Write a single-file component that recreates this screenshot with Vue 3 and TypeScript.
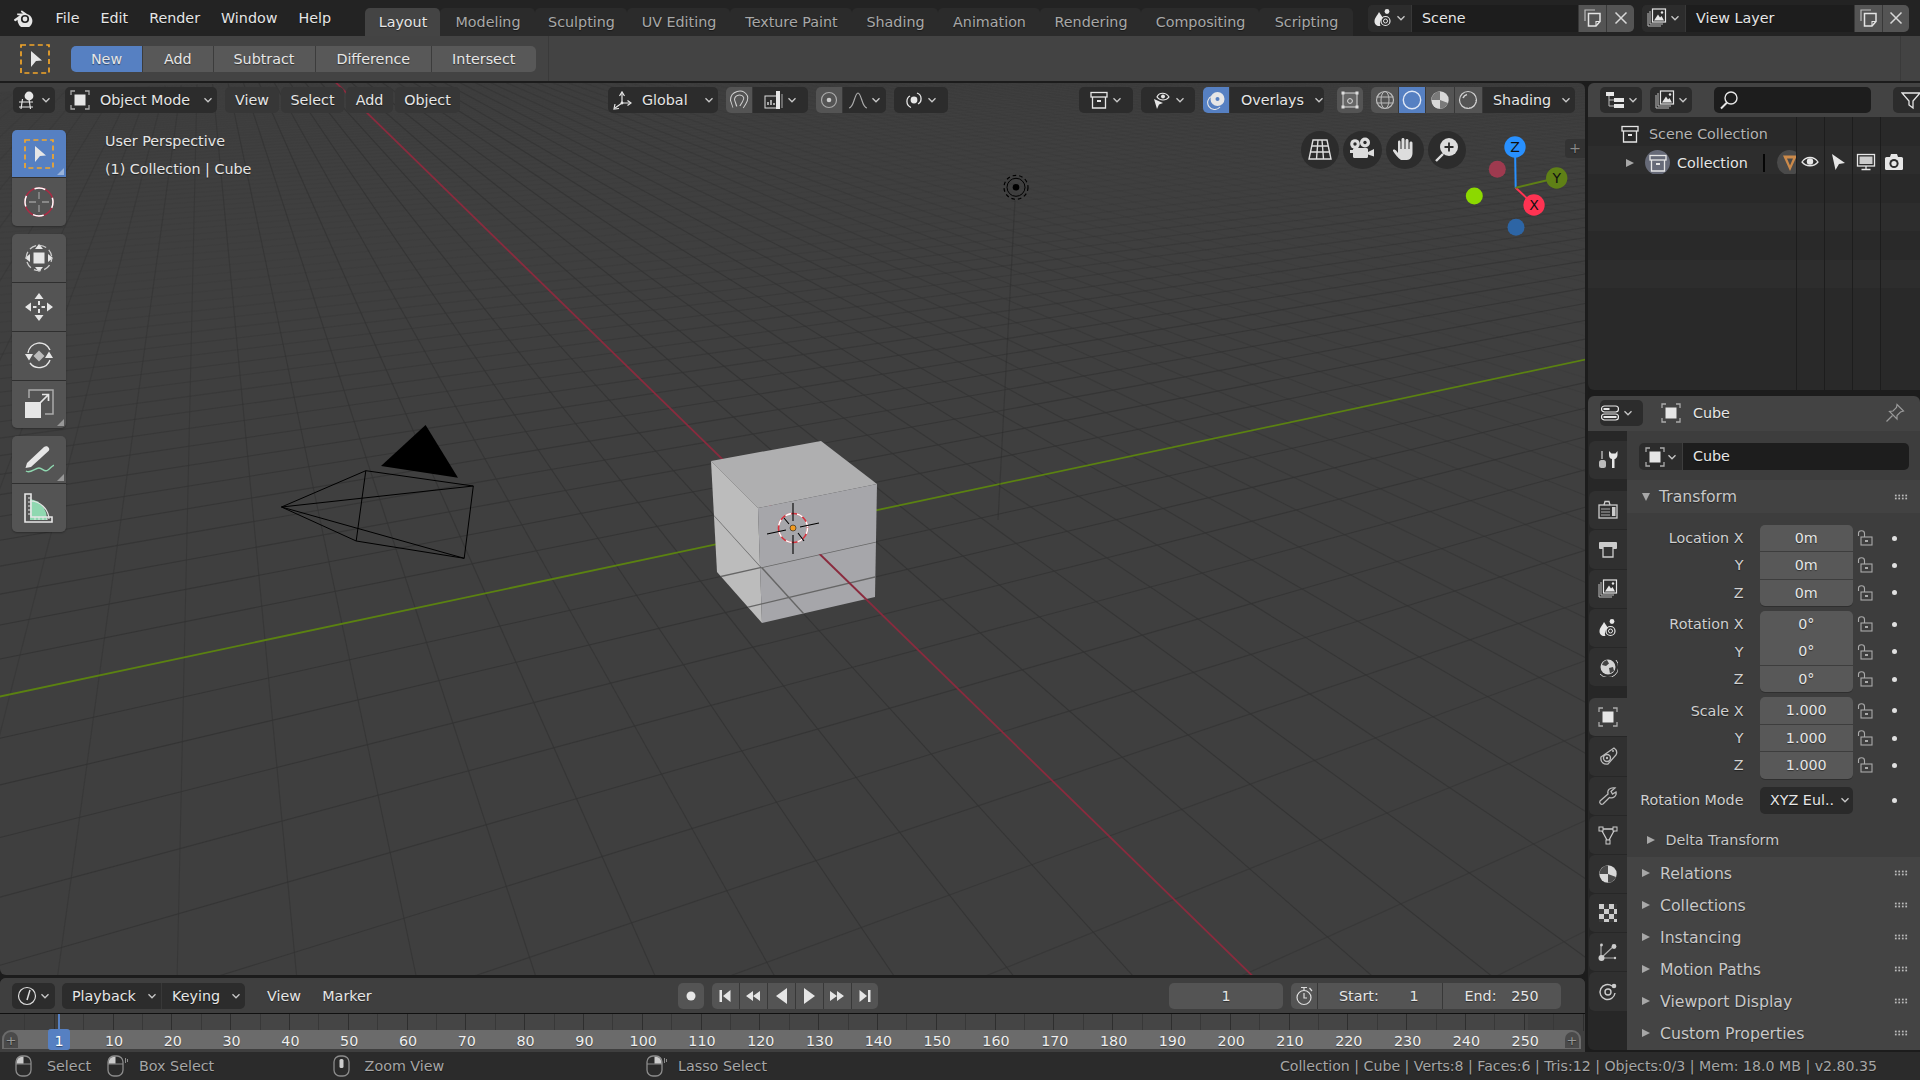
<template>
  <div class="app">
    <!-- barra superior -->
    <header class="topbar">
      <div class="logo"><svg width="22" height="18" viewBox="0 0 22 18" v-html="logoIcon" /></div>
      <nav class="menus">
        <span v-for="m in menus" :key="m" class="menu">{{ m }}</span>
      </nav>
      <div class="tabs">
        <div
          v-for="t in tabs"
          :key="t.name"
          class="tab"
          :class="{ active: t.name === 'Layout' }"
          :style="{ width: t.w + 'px' }"
        >
          {{ t.name }}
        </div>
      </div>
      <div class="bar-groups">
        <div v-for="(g, i) in topGroups" :key="i" class="grp" :style="{ marginLeft: g.gap + 'px' }">
          <div v-for="(p, j) in g.parts" :key="j" class="part" :class="partClass(p)" :style="partStyle(p)">
            <svg v-if="p.icon" width="20" height="20" viewBox="0 0 20 20" v-html="icons[p.icon]" />
            <span v-if="p.text">{{ p.text }}</span>
            <svg v-if="p.chev" class="chev" width="10" height="10" viewBox="0 0 10 10" v-html="chevron" />
          </div>
        </div>
      </div>
    </header>

    <!-- opções da ferramenta -->
    <section class="toolsettings">
      <div class="ts-icon"><svg width="30" height="30" viewBox="0 0 30 30" v-html="tools.select" /></div>
      <div class="booleans">
        <div
          v-for="b in booleans"
          :key="b.name"
          class="bool"
          :class="{ on: b.name === 'New' }"
          :style="{ width: b.w + 'px' }"
        >
          {{ b.name }}
        </div>
      </div>
      <div class="ts-sep" />
      <div class="ts-sep end" />
    </section>

    <div class="workspace">
      <div class="left-col">
        <!-- viewport 3D -->
        <main class="viewport">
          <svg class="scene" width="1585" height="892" viewBox="0 83 1585 892">
            <defs>
              <clipPath id="lowerCube"><polygon :points="lowerCubeClip" /></clipPath>
            </defs>
            <path v-for="l in gridLines" :key="l.id" :d="l.d" fill="none" stroke="#333" :stroke-opacity="l.o" stroke-width="1.1" />
            <path :d="redAxis" stroke="#8a2b3e" stroke-width="1.8" fill="none" />
            <path :d="greenAxis" stroke="#5b8211" stroke-width="1.8" fill="none" />

            <!-- câmera -->
            <g fill="none" stroke="#000" stroke-width="1">
              <path d="M281.5 507 L365.8 470.7 L473.3 486 L464.2 558.3 L356.2 541 L281.5 507 L473.3 486 M281.5 507 L464.2 558.3 M365.8 470.7 L356.2 541" />
            </g>
            <polygon points="425.6,425 381,466 458,477.7" fill="#000" />

            <!-- lâmpada -->
            <path d="M1015 200 L998 520" stroke="#2a2a2a" stroke-width="1.2" stroke-opacity=".4" />
            <circle cx="1016" cy="187.3" r="3.3" fill="#000" />
            <circle cx="1016" cy="187.3" r="9" fill="none" stroke="#000" stroke-width="1" />
            <circle cx="1016" cy="187.3" r="12" fill="none" stroke="#000" stroke-width="1.2" stroke-dasharray="3.6 3" />

            <!-- cubo -->
            <polygon points="711,461 821,441 877,484 758,508" fill="#afafb0" />
            <polygon points="711,461 758,508 762,623 717,572" fill="#bcbcbc" />
            <polygon points="758,508 877,484 875,597 762,623" fill="#a6a6aa" />
            <g clip-path="url(#lowerCube)">
              <path v-for="l in cubeLines" :key="l" :d="l" fill="none" stroke="#666" stroke-width="1.4" />
              <path :d="redAxis" stroke="#8a2b3e" stroke-width="2" fill="none" />
            </g>

            <!-- cursor 3D -->
            <g fill="none">
              <circle cx="793" cy="528" r="14.5" stroke="#d8323e" stroke-width="1.6" />
              <circle cx="793" cy="528" r="14.5" stroke="#fff" stroke-width="1.6" stroke-dasharray="6 6" />
              <path d="M793 503 V521 M793 535 V554 M767 534 L786 530 M800 527 L819 523 M784 518 L789 524 M798 533 L804 541" stroke="#000" stroke-width="1.1" />
            </g>
            <circle cx="793" cy="528" r="3" fill="#f29b21" stroke="#1a1a1a" stroke-width=".6" />
          </svg>

          <div class="vp-header">
            <div v-for="(g, i) in viewGroups" :key="i" class="grp" :style="{ marginLeft: g.gap + 'px' }">
              <div v-for="(p, j) in g.parts" :key="j" class="part" :class="partClass(p)" :style="partStyle(p)">
                <svg v-if="p.icon" width="20" height="20" viewBox="0 0 20 20" v-html="icons[p.icon]" />
                <span v-if="p.text">{{ p.text }}</span>
                <svg v-if="p.chev" class="chev" width="10" height="10" viewBox="0 0 10 10" v-html="chevron" />
              </div>
            </div>
          </div>

          <div class="vp-body">
            <aside class="toolbar">
              <div v-for="(group, i) in toolGroups" :key="i" class="tool-group">
                <div v-for="t in group" :key="t.id" class="tool" :class="{ on: t.id === 'select' }" :style="{ height: t.h + 'px' }">
                  <svg width="30" height="30" viewBox="0 0 30 30" v-html="tools[t.id]" />
                  <i v-if="t.more" class="more" />
                </div>
              </div>
            </aside>
            <div class="vp-info">
              <div>User Perspective</div>
              <div>(1) Collection | Cube</div>
            </div>
          </div>

          <!-- gizmos de navegação -->
          <div class="nav-buttons">
            <div v-for="b in navButtons" :key="b" class="nav-btn">
              <svg width="26" height="26" viewBox="0 0 26 26" v-html="navIcons[b]" />
            </div>
          </div>
          <svg class="axis-gizmo" width="120" height="120" viewBox="1460 130 120 120">
            <circle cx="1497.3" cy="169.3" r="8.5" fill="#9e3a4f" />
            <circle cx="1474.3" cy="196" r="8.5" fill="#8cd900" />
            <circle cx="1516" cy="227.3" r="8.5" fill="#2d65a5" />
            <path d="M1515.7 187.7 L1515 147" stroke="#2890ff" stroke-width="2" />
            <path d="M1515.7 187.7 L1534 205" stroke="#ff3352" stroke-width="2" />
            <path d="M1515.7 187.7 L1556.7 178" stroke="#5f8016" stroke-width="2" />
            <circle cx="1515" cy="147" r="10.7" fill="#2890ff" />
            <circle cx="1534" cy="205" r="10.7" fill="#ff3352" />
            <circle cx="1556.7" cy="178" r="10.7" fill="#5f8016" />
            <text x="1515" y="152" class="axis-letter">Z</text>
            <text x="1534" y="210" class="axis-letter">X</text>
            <text x="1556.7" y="183" class="axis-letter">Y</text>
          </svg>
          <div class="vp-plus">+</div>
        </main>

        <!-- linha do tempo -->
        <section class="timeline">
          <div class="tl-header">
            <div v-for="(g, i) in timelineGroups" :key="i" class="grp" :class="{ plain: g.plain }" :style="{ marginLeft: g.gap + 'px' }">
              <div v-for="(p, j) in g.parts" :key="j" class="part" :class="partClass(p)" :style="partStyle(p)">
                <svg v-if="p.icon" width="20" height="20" viewBox="0 0 20 20" v-html="icons[p.icon]" />
                <span v-if="p.text">{{ p.text }}</span>
                <span v-if="p.text2" class="val">{{ p.text2 }}</span>
                <svg v-if="p.chev" class="chev" width="10" height="10" viewBox="0 0 10 10" v-html="chevron" />
              </div>
            </div>
          </div>
          <div class="tl-body">
            <svg class="tl-ticks" width="1585" height="35" viewBox="0 0 1585 35">
              <rect x="59" y="0" width="1469" height="35" fill="#454545" />
              <path v-for="t in timelineTicks" :key="t.x" :d="`M${t.x} 0 V17`" :stroke="t.major ? '#2e2e2e' : '#383838'" stroke-width="1" />
            </svg>
            <div class="tl-line" />
            <div class="ruler">
              <span v-for="f in frameLabels" :key="f" class="frame-num" :style="{ left: frameX(f) + 1.5 + 'px' }">{{ f }}</span>
              <span class="ruler-end left">+</span>
              <span class="ruler-end right">+</span>
            </div>
            <div class="frame-cursor"><span>1</span></div>
          </div>
        </section>
      </div>

      <div class="right-col">
        <!-- outliner -->
        <section class="outliner">
          <div class="ol-header">
            <div v-for="(g, i) in outlinerGroups" :key="i" class="grp" :style="{ marginLeft: g.gap + 'px' }">
              <div v-for="(p, j) in g.parts" :key="j" class="part" :class="partClass(p)" :style="partStyle(p)">
                <svg v-if="p.icon" width="20" height="20" viewBox="0 0 20 20" v-html="icons[p.icon]" />
                <svg v-if="p.chev" class="chev" width="10" height="10" viewBox="0 0 10 10" v-html="chevron" />
              </div>
            </div>
          </div>
          <div class="ol-rows">
            <div class="ol-row">
              <div class="ol-clip">
                <svg class="ol-scene-ic" width="20" height="20" viewBox="0 0 20 20" v-html="icons.collection" />
                <span class="ol-scene">Scene Collection</span>
              </div>
            </div>
            <div class="ol-row alt">
              <div class="ol-clip">
                <i class="tri right ol-tri" />
                <span class="ol-badge"><svg width="20" height="20" viewBox="0 0 20 20" v-html="icons.collection" /></span>
                <span class="ol-name">Collection</span>
                <i class="ol-caret" />
                <span class="ol-mesh"><svg width="20" height="20" viewBox="0 0 20 20" v-html="icons.meshData" /></span>
              </div>
            </div>
            <div class="ol-row" />
            <div class="ol-row alt" />
            <div class="ol-row" />
            <div class="ol-row alt" />
            <div class="ol-row" />
            <div class="ol-cols">
              <div v-for="c in outlinerCols" :key="c" class="ol-col">
                <svg class="ol-col-ic" width="20" height="20" viewBox="0 0 20 20" v-html="icons[c]" />
              </div>
            </div>
          </div>
        </section>

        <!-- propriedades -->
        <section class="properties">
          <div class="pr-header">
            <div class="grp">
              <div class="part dark" style="width: 43px">
                <svg width="20" height="20" viewBox="0 0 20 20" v-html="icons.propsEditor" />
                <svg class="chev" width="10" height="10" viewBox="0 0 10 10" v-html="chevron" />
              </div>
            </div>
            <svg class="pr-cube" width="20" height="20" viewBox="0 0 20 20" v-html="icons.object" />
            <span class="pr-title">Cube</span>
            <svg class="pr-pin" width="20" height="20" viewBox="0 0 20 20" v-html="icons.pin" />
          </div>
          <div class="pr-main">
            <nav class="pr-tabs">
              <div v-for="(tg, i) in propTabs" :key="i" class="pr-tabgroup">
                <div v-for="t in tg" :key="t" class="pr-tab" :class="{ on: t === 'object' }">
                  <svg width="20" height="20" viewBox="0 0 20 20" v-html="icons[t]" />
                </div>
              </div>
            </nav>
            <div class="pr-content">
              <div class="name-row">
                <div class="name-ic">
                  <svg width="20" height="20" viewBox="0 0 20 20" v-html="icons.object" />
                  <svg class="chev" width="10" height="10" viewBox="0 0 10 10" v-html="chevron" />
                </div>
                <div class="name-field">Cube</div>
              </div>

              <div class="panel-head first">
                <i class="tri down" />
                <span>Transform</span>
                <span class="grip" />
              </div>
              <div class="panel-body">
                <div v-for="blk in transformBlocks" :key="blk.id" class="xf-block">
                  <div v-for="(r, i) in blk.rows" :key="i" class="xf-row">
                    <label>{{ r.label }}</label>
                    <div class="xf-field" :class="{ first: i === 0, last: i === blk.rows.length - 1 }">{{ r.value }}</div>
                    <svg class="lock" width="18" height="18" viewBox="0 0 18 18" v-html="lockIcon" />
                    <i class="dot" />
                  </div>
                </div>
                <div class="xf-row mode">
                  <label>Rotation Mode</label>
                  <div class="mode-select">
                    <span>XYZ Eul..</span>
                    <svg class="chev" width="10" height="10" viewBox="0 0 10 10" v-html="chevron" />
                  </div>
                  <i class="dot" />
                </div>
                <div class="subpanel"><i class="tri right" /><span>Delta Transform</span></div>
              </div>
              <div class="collapsed">
                <div v-for="p in collapsedPanels" :key="p" class="panel-head">
                  <i class="tri right" />
                  <span>{{ p }}</span>
                  <span class="grip" />
                </div>
              </div>
            </div>
          </div>
        </section>
      </div>
    </div>

    <!-- barra de status -->
    <footer class="statusbar">
      <div v-for="s in statusHints" :key="s.text" class="hint" :style="{ width: s.w + 'px' }">
        <svg width="22" height="22" viewBox="0 0 22 22" v-html="mouseIcons[s.mouse]" />
        <span>{{ s.text }}</span>
      </div>
      <div class="stats">Collection | Cube | Verts:8 | Faces:6 | Tris:12 | Objects:0/3 | Mem: 18.0 MB | v2.80.35</div>
    </footer>
  </div>
</template>

<script setup lang="ts">
interface Part {
  w: number
  icon?: string
  text?: string
  text2?: string
  chev?: boolean
  tone?: string
  left?: boolean
  pad?: number
  padR?: number
}

interface Group {
  gap: number
  plain?: boolean
  parts: Part[]
}

const W = '#e6e6e6'

const chevron = '<path d="M1.5 3.2 L5 6.8 L8.5 3.2" fill="none" stroke="#c8c8c8" stroke-width="1.3"/>'

const logoIcon =
  `<path fill="${W}" d="M1 10.5 L7 6.2 L5 6.2 Q3.8 6 4.2 4.6 L10 4.6 L8 3 Q7.6 1.8 9 1.6 L14 5 A7.2 7.2 0 1 1 5.4 14.4 A6 6 0 0 1 4.6 10.8 L2.6 12.3 Q1 12.4 1 10.5 Z"/>` +
  `<circle cx="12" cy="10" r="4.1" fill="#232323"/><circle cx="12" cy="10" r="2.4" fill="${W}"/>`

const icons: Record<string, string> = {
  view3d:
    `<path d="M1 12 H15 M1 17 H15 M4.5 9 L3 19 M11 9 L12.5 19" fill="none" stroke="${W}" stroke-width="1.2"/><circle cx="11" cy="6" r="4.4" fill="${W}"/>`,
  object:
    `<path d="M1 5 V1 H5 M15 1 H19 V5 M19 15 V19 H15 M5 19 H1 V15" fill="none" stroke="#aaa" stroke-width="1.3"/><rect x="4.5" y="4.5" width="11" height="11" fill="${W}"/>`,
  orient:
    `<path d="M10 3 V13 M10 13 L18 13 M10 13 L3 18" fill="none" stroke="${W}" stroke-width="1.2"/><path d="M7.5 6 L10 2 L12.5 6 M15.5 10.5 L19 13 L15.5 15.5 M3 14 L2 19 L7 18.5" fill="none" stroke="${W}" stroke-width="1.2"/><circle cx="10" cy="13" r="1.4" fill="${W}"/>`,
  snap:
    `<path d="M6 17 L3.5 10 A7 7 0 0 1 16.5 6.5 C17.5 9 16 11 15 13 L12.5 17" fill="none" stroke="#d0d0d0" stroke-width="5"/><path d="M6 18 L3.5 10 A7 7 0 0 1 16.5 6.5 C17.5 9 16 11 15 13 L12 18" fill="none" stroke="#545454" stroke-width="3"/>`,
  snapTarget:
    `<rect x="1" y="6" width="12" height="12" fill="none" stroke="#ddd" stroke-width="1"/><path d="M4 15 V12 M7 15 V10 M10 15 V13" stroke="#ddd" stroke-width="1.4"/><rect x="12" y="1" width="4" height="18" fill="${W}"/><path d="M18 4 V18" stroke="#aaa"/>`,
  propOn:
    `<circle cx="10" cy="10" r="7.5" fill="none" stroke="#aaa" stroke-width="1.2"/><circle cx="10" cy="10" r="2.3" fill="#ccc"/>`,
  falloff:
    `<path d="M1 18 C6 18 6.5 3 10 3 C13.5 3 14 18 19 18" fill="none" stroke="#aaa" stroke-width="1.2"/>`,
  pivot:
    `<path d="M7 17.5 C1.5 15 2 8 6 6 M13 3 C18.5 5 18 12 14 14" fill="none" stroke="${W}" stroke-width="1.3"/><circle cx="10" cy="10" r="3.4" fill="${W}"/>`,
  collection:
    `<rect x="2" y="2.5" width="16" height="4.5" fill="none" stroke="${W}" stroke-width="1.3"/><path d="M3.5 7 V18 H16.5 V7" fill="none" stroke="${W}" stroke-width="1.3"/><rect x="8" y="10" width="4" height="2" fill="${W}"/>`,
  eyeArrow:
    `<path d="M5 7 C7 2 14 2 17 7 C14 11 8 11 5 7 Z" fill="none" stroke="${W}" stroke-width="1.2"/><circle cx="11" cy="6.5" r="2" fill="${W}"/><path d="M2 9 L11 13 L7 14.5 L5 19 Z" fill="${W}"/>`,
  overlays:
    `<circle cx="11.5" cy="9" r="7" fill="${W}"/><path d="M6 6 A7 7 0 1 0 14 17" fill="none" stroke="${W}" stroke-width="1.1"/><circle cx="11.5" cy="9" r="2" fill="#5680c2"/>`,
  xray:
    `<rect x="3" y="3" width="14" height="14" fill="#666" stroke="#ccc" stroke-width="1.1"/><rect x="1.5" y="1.5" width="3" height="3" fill="#ddd"/><rect x="15.5" y="1.5" width="3" height="3" fill="#ddd"/><rect x="1.5" y="15.5" width="3" height="3" fill="#ddd"/><rect x="15.5" y="15.5" width="3" height="3" fill="#ddd"/><circle cx="10" cy="11" r="2.4" fill="none" stroke="#ddd"/>`,
  wire:
    `<circle cx="10" cy="10" r="8.5" fill="none" stroke="#bdbdbd" stroke-width="1.2"/><ellipse cx="10" cy="10" rx="4" ry="8.5" fill="none" stroke="#bdbdbd"/><path d="M1.5 7 H18.5 M1.5 13 H18.5" stroke="#bdbdbd"/>`,
  solid: `<circle cx="10" cy="10" r="8.7" fill="none" stroke="#dfe7f5" stroke-width="1.4"/>`,
  material:
    `<circle cx="10" cy="10" r="8.7" fill="#d8d8d8"/><path d="M10 1.5 A8.5 8.5 0 0 0 1.5 10 L10 10 Z M10 10 L18 13 A8.5 8.5 0 0 1 10 18.5 Z" fill="#7a7a7a"/><path d="M10 10 L10 18.5 A8.5 8.5 0 0 1 2 13 Z" fill="#d8d8d8"/>`,
  rendered:
    `<circle cx="10" cy="10" r="8.5" fill="none" stroke="#d0d0d0" stroke-width="1.2"/><path d="M5 8 A6 6 0 0 1 9 4.5" fill="none" stroke="#d0d0d0" stroke-width="1.6"/><path d="M6 17 A8 8 0 0 0 18 10" fill="none" stroke="#d0d0d0" stroke-width="1" stroke-dasharray="1.4 1.2"/>`,
  tree:
    `<rect x="1" y="2" width="8" height="4" fill="${W}"/><rect x="9" y="8" width="10" height="4" fill="${W}"/><rect x="9" y="14" width="10" height="4" fill="${W}"/><path d="M4 6 V16 H9 M4 10 H9" fill="none" stroke="#bbb"/>`,
  viewLayer:
    `<path d="M1 5 V18 H14 M3 3 V16 H16" fill="none" stroke="#bbb" stroke-width="1"/><rect x="5.5" y="1" width="13" height="13" fill="none" stroke="${W}" stroke-width="1.2"/><path d="M7 12.5 L11 6.5 L13 9.5 L14.5 8 L17 12.5 Z" fill="${W}"/><circle cx="15" cy="4.5" r="1.2" fill="${W}"/>`,
  search:
    `<circle cx="12" cy="8" r="6" fill="none" stroke="${W}" stroke-width="1.4"/><path d="M8 12.5 L2 18.5" stroke="${W}" stroke-width="2"/>`,
  filter: `<path d="M1 3 H19 L12 11 V18 L8 15 V11 Z" fill="none" stroke="${W}" stroke-width="1.3"/>`,
  scene:
    `<path d="M6 4 C4 8 1.5 10 1.5 13.5 C1.5 16 3.6 18 6 18 C6.5 18 7 18 7.5 17.8 A6 6 0 0 1 10 10 Z" fill="${W}"/><circle cx="14" cy="3.5" r="2.4" fill="${W}"/><circle cx="12.5" cy="13" r="4.5" fill="none" stroke="${W}" stroke-width="1.2"/><circle cx="12.5" cy="13" r="2" fill="none" stroke="${W}"/>`,
  copy:
    `<path d="M2 13 V2 H12" fill="none" stroke="#bdbdbd" stroke-width="1.2"/><path d="M5.5 5.5 H17 V13.5 L13 18 H5.5 Z" fill="none" stroke="#e4e4e4" stroke-width="1.5"/><path d="M13 18 V13.5 H17" fill="none" stroke="#e4e4e4" stroke-width="1.1"/>`,
  close: `<path d="M4.5 4.5 L15.5 15.5 M15.5 4.5 L4.5 15.5" stroke="#d8d8d8" stroke-width="1.5"/>`,
  clock:
    `<circle cx="10" cy="10" r="8.5" fill="none" stroke="#ddd" stroke-width="1.2"/><path d="M10 14 L13 4" stroke="#ddd" stroke-width="1.5"/>`,
  record: `<circle cx="10" cy="10" r="4.5" fill="${W}"/>`,
  jumpStart: `<rect x="4.5" y="4" width="2.5" height="12" fill="${W}"/><path d="M15.5 4 V16 L8 10 Z" fill="${W}"/>`,
  rewind: `<path d="M10 5 V15 L3 10 Z M17 5 V15 L10 10 Z" fill="${W}"/>`,
  playBack: `<path d="M15 2 V18 L4 10 Z" fill="${W}"/>`,
  play: `<path d="M5 2 V18 L16 10 Z" fill="${W}"/>`,
  forward: `<path d="M3 5 V15 L10 10 Z M10 5 V15 L17 10 Z" fill="${W}"/>`,
  jumpEnd: `<path d="M4.5 4 V16 L12 10 Z" fill="${W}"/><rect x="13" y="4" width="2.5" height="12" fill="${W}"/>`,
  timer:
    `<circle cx="10" cy="11.5" r="7" fill="none" stroke="#ddd" stroke-width="1.2"/><path d="M7 1.5 H13 M10 2 V4.5 M10 7 V12 H13 M15.5 2 L18 5" fill="none" stroke="#ddd" stroke-width="1.2"/>`,
  propsEditor:
    `<rect x="1.5" y="3" width="17" height="6" rx="3" fill="none" stroke="${W}" stroke-width="1.2"/><rect x="1.5" y="11" width="17" height="6" rx="3" fill="none" stroke="${W}" stroke-width="1.2"/><rect x="3.5" y="5" width="6" height="2" fill="${W}"/><rect x="3.5" y="13" width="13" height="2" fill="${W}"/>`,
  pin:
    `<path d="M12 1.5 L18.5 8 L15.5 9 L12 12.5 L12 16 L4.5 8.5 L8 8 L11.5 4.5 Z" fill="none" stroke="#999" stroke-width="1.2"/><path d="M7.5 12.5 L1.5 18.5" stroke="#999" stroke-width="1.2"/>`,
  tool:
    `<path d="M4 1 V9" stroke="#bbb" stroke-width="1.4"/><rect x="1" y="10" width="7" height="8" rx="2.5" fill="#bbb"/><path d="M11 1 V5 C11 8 13 9 14 9 V18 H16.5 V9 C18 9 19.5 7 19.5 5 V1 L17.5 3.5 H13.5 Z" fill="${W}"/>`,
  render:
    `<rect x="1" y="5" width="18" height="13" fill="none" stroke="#ccc" stroke-width="1.3"/><path d="M6 5 L7 1.5 H11 L12 5" fill="none" stroke="#ccc" stroke-width="1.3"/><path d="M3 9 H12 M3 12 H12 M3 15 H12" stroke="#aaa"/><rect x="14" y="7" width="3.5" height="9" fill="#ccc"/>`,
  output:
    `<rect x="1" y="3" width="18" height="7" rx="1" fill="#ccc"/><path d="M5 8 V18 H15 V8" fill="#333" stroke="#ccc" stroke-width="1.3"/>`,
  world:
    `<circle cx="10" cy="10" r="7.5" fill="#d4d4d4"/><path d="M9 3 L11 6.5 L8 9 L4 8 A7 7 0 0 1 9 3 Z M11 11 L15 10 L16 14 L12 16.5 Z" fill="#444"/><path d="M2 17 A10 10 0 0 0 18 3" fill="none" stroke="#ccc" stroke-width="1"/>`,
  constraint:
    `<path d="M3 11 L16 2 C19 4 19 7 18 9 L10 18 C6 19 2 16 3 11 Z" fill="none" stroke="#bbb" stroke-width="1.3"/><circle cx="9" cy="12" r="3.5" fill="none" stroke="#bbb" stroke-width="1.4"/><circle cx="9" cy="12" r="1.2" fill="#bbb"/><circle cx="15" cy="5" r="1" fill="#bbb"/>`,
  modifier:
    `<path d="M2 15 L10 8 C9 4 12 1 17 2 L13 5.5 L14.5 8 L18 6 C19 10 15 13 11.5 11.5 L5 18 C3 19 1 17 2 15 Z" fill="none" stroke="#bbb" stroke-width="1.3"/>`,
  mesh:
    `<path d="M3 4 H17 L10 17 Z" fill="none" stroke="#ccc" stroke-width="1.3"/><rect x="1" y="2" width="4" height="4" fill="#333" stroke="#ccc"/><rect x="15" y="2" width="4" height="4" fill="#333" stroke="#ccc"/><rect x="8" y="15" width="4" height="4" fill="#333" stroke="#ccc"/>`,
  matTab:
    `<circle cx="10" cy="10" r="8.7" fill="#d8d8d8"/><path d="M10 1.5 A8.5 8.5 0 0 0 1.5 10 L10 10 Z M10 10 L18 13 A8.5 8.5 0 0 1 10 18.5 Z" fill="#4a4a4a"/>`,
  texture:
    `<rect x="1" y="1" width="18" height="18" fill="#3a3a3a"/><path d="M1 1 H6 V6 H1 Z M11 1 H16 V6 H11 Z M6 6 H11 V11 H6 Z M16 6 H19 V11 H16 Z M1 11 H6 V16 H1 Z M11 11 H16 V16 H11 Z M6 16 H11 V19 H6 Z M16 16 H19 V19 H16 Z" fill="#ccc"/>`,
  particles:
    `<path d="M3 16 L17 3 M3 16 H17 M3 16 V3" stroke="#aaa" stroke-width="1.2" fill="none"/><circle cx="3.5" cy="16" r="3" fill="#ccc"/><circle cx="16" cy="4.5" r="2.4" fill="#ccc"/><circle cx="3.5" cy="3" r="1.4" fill="#ccc"/><circle cx="17" cy="16" r="1.2" fill="#ccc"/>`,
  physics:
    `<path d="M14 4 A7.5 7.5 0 1 0 17 11" fill="none" stroke="#ccc" stroke-width="1.4"/><circle cx="10" cy="10" r="3" fill="none" stroke="#ccc" stroke-width="1.4"/><circle cx="16" cy="4" r="2.3" fill="#ccc"/>`,
  meshData: `<path d="M3 2.5 H17 L10 18 Z M7 5.5 H13 L10 12.5 Z" fill="#cc8a4a" fill-rule="evenodd"/>`,
  eye:
    `<path d="M2 10 C6 4 14 4 18 10 C14 15 6 15 2 10 Z" fill="none" stroke="${W}" stroke-width="1.3"/><circle cx="10" cy="9.5" r="3.2" fill="${W}"/>`,
  cursorArrow: `<path d="M4 2 L17 11 L11 12 L7.5 18 Z" fill="${W}"/>`,
  monitor:
    `<rect x="1.5" y="2.5" width="17" height="11.5" fill="none" stroke="${W}" stroke-width="1.3"/><rect x="3.5" y="4.5" width="13" height="7.5" fill="#ccc"/><path d="M10 14 V17 M5.5 17.5 H14.5" stroke="${W}" stroke-width="1.3"/>`,
  cameraRender:
    `<rect x="1" y="5" width="18" height="13" rx="1.5" fill="${W}"/><path d="M6 5 L7 2 H13 L14 5 Z" fill="${W}"/><circle cx="10" cy="11.5" r="4.6" fill="#2b2b2b"/><circle cx="10" cy="11.5" r="2.6" fill="${W}"/>`,
}

const tools: Record<string, string> = {
  select:
    `<rect x="1" y="1" width="28" height="28" fill="none" stroke="#f4a62a" stroke-width="1.7" stroke-dasharray="5 3.4"/><path d="M11 7 L22 16.5 L16 17 L11 23 Z" fill="${W}"/>`,
  cursor:
    `<circle cx="15" cy="15" r="14" fill="none" stroke="#a82c44" stroke-width="1.5"/><circle cx="15" cy="15" r="14" fill="none" stroke="#fff" stroke-width="1.5" stroke-dasharray="11 11" stroke-dashoffset="5"/><path d="M15 5 V12 M15 18 V25 M5 15 H12 M18 15 H25" stroke="#999" stroke-width="1.3"/>`,
  transform:
    `<rect x="9.5" y="9.5" width="11" height="11" fill="${W}"/><path d="M15 1 L19 6 H11 Z M15 29 L19 24 H11 Z M1 15 L6 11 V19 Z M29 15 L24 11 V19 Z" fill="${W}"/><circle cx="15" cy="15" r="12.7" fill="none" stroke="#ccc" stroke-width="1.3" stroke-dasharray="7 3.5" stroke-dashoffset="3"/>`,
  move:
    `<path d="M15 1 L19.5 7 H10.5 Z M15 29 L19.5 23 H10.5 Z M1 15 L7 10.5 V19.5 Z M29 15 L23 10.5 V19.5 Z" fill="${W}"/><path d="M15 9 V13 M15 17 V21 M9 15 H12.5 M17.5 15 H21" stroke="${W}" stroke-width="2"/>`,
  rotate:
    `<path d="M15 9.5 L20.5 15 L15 20.5 L9.5 15 Z" fill="#bbb"/><path d="M4 12 A11.5 11.5 0 0 1 26 9 M26 19 A11.5 11.5 0 0 1 6 22" fill="none" stroke="${W}" stroke-width="1.4"/><path d="M1 13 H9 L5 19.5 Z M21 17 H29 L25 10.5 Z" fill="${W}"/>`,
  scale:
    `<rect x="1" y="13" width="16" height="16" fill="${W}"/><path d="M5 9 V1 H29 V25 H21" fill="none" stroke="#aaa" stroke-width="1.5"/><path d="M14 16 L24 6 M18 5.5 H24.5 V12" fill="none" stroke="${W}" stroke-width="1.7"/>`,
  annotate:
    `<path d="M1.5 23 L3 18 L20 2 C21.5 1 23.5 1 24.5 2.5 C25.5 3.5 25.5 5 24.5 6 L7 22 Z" fill="${W}"/><path d="M2 26 C6 29 11 23 15 23 C19 23 20 28 24 25 C27 23 28 20 31 20" fill="none" stroke="#8fd8b0" stroke-width="1.4"/>`,
  measure:
    `<path d="M8 17 V6 A 20 20 0 0 1 25 27 H8 Z" transform="translate(-2 0)" fill="#8fd8b0"/><path d="M1 1 H7 V24 H28 V29 H1 Z" fill="none" stroke="${W}" stroke-width="1.6"/><path d="M7 5 H4 M7 9 H4 M7 13 H4 M7 17 H4 M7 21 H4 M11 24 V27 M15 24 V27 M19 24 V27 M23 24 V27" stroke="${W}"/><path d="M6 8 A19 19 0 0 1 25 26" fill="none" stroke="${W}" stroke-width="1.2"/>`,
}

const navIcons: Record<string, string> = {
  grid:
    `<path d="M6 3 H20 L24 22 H2 Z M11 3 L9.5 22 M15 3 L16.5 22 M4.5 9 H21.5 M3.3 15 H22.7" fill="none" stroke="#ddd" stroke-width="1.4"/>`,
  camera:
    `<circle cx="6" cy="7" r="4.8" fill="#ddd"/><circle cx="16" cy="5.5" r="5" fill="#ddd"/><circle cx="6" cy="7" r="1.7" fill="#2b2b2b"/><circle cx="16" cy="5.5" r="1.7" fill="#2b2b2b"/><rect x="4" y="11" width="15" height="10" rx="1.5" fill="#ddd"/><path d="M19 15 L25 12 V19.5 L19 17.5 Z M1 13 H4 V16 H1 Z" fill="#ddd"/>`,
  hand:
    `<path d="M9 23 C6 21 3 17 1 14 C0.5 12 3 12 4.5 14 L6 16 V5 C6 3 8.5 3 8.5 5 V12 H9.5 V2.5 C9.5 0.5 12.5 0.5 12.5 2.5 V12 H13.5 V3.5 C13.5 1.5 16.5 1.5 16.5 3.5 V12 H17.5 V6 C17.5 4 20.5 4 20.5 6 V16 C20.5 20 18 23 15 23 Z" fill="#ddd"/>`,
  zoom:
    `<circle cx="15" cy="10" r="9" fill="#ddd"/><path d="M15 5.5 V14.5 M10.5 10 H19.5" stroke="#2b2b2b" stroke-width="1.8"/><path d="M9 17 L2 24" stroke="#ddd" stroke-width="2.4"/>`,
}

const mouseBody =
  '<rect x="2" y="1" width="15" height="20" rx="6" fill="none" stroke="#8c8c8c" stroke-width="1.3"/><path d="M2 9 H17" stroke="#8c8c8c"/>'

const mouseIcons: Record<string, string> = {
  left: mouseBody + '<path d="M9.5 1.8 H8 A5.5 5.5 0 0 0 2.7 7 V8.5 H9.5 Z" fill="#ccc"/>',
  drag: mouseBody + '<path d="M9.5 1.8 H8 A5.5 5.5 0 0 0 2.7 7 V8.5 H9.5 Z" fill="#ccc"/><path d="M19.5 3 V8 M21.5 4 V7" stroke="#8c8c8c"/>',
  middle: '<rect x="2" y="1" width="15" height="20" rx="6" fill="none" stroke="#8c8c8c" stroke-width="1.3"/><rect x="7.5" y="4" width="4" height="9" rx="1.5" fill="#ccc"/>',
  right: mouseBody + '<path d="M9.5 1.8 H11 A5.5 5.5 0 0 1 16.3 7 V8.5 H9.5 Z" fill="#ccc"/><path d="M19.5 3 V8 M21.5 4 V7" stroke="#8c8c8c"/>',
}

const lockIcon =
  '<path d="M2.5 7 V4.5 C2.5 0.8 8.5 0.8 8.5 4.5 V8" fill="none" stroke="#aaa" stroke-width="1.1"/><rect x="5" y="8" width="11" height="8" fill="none" stroke="#aaa" stroke-width="1.1"/><rect x="9" y="11" width="3" height="2" fill="#aaa"/>'

const menus = ['File', 'Edit', 'Render', 'Window', 'Help']

const tabs = [
  { name: 'Layout', w: 75 },
  { name: 'Modeling', w: 95 },
  { name: 'Sculpting', w: 92 },
  { name: 'UV Editing', w: 103 },
  { name: 'Texture Paint', w: 122 },
  { name: 'Shading', w: 86 },
  { name: 'Animation', w: 102 },
  { name: 'Rendering', w: 101 },
  { name: 'Compositing', w: 118 },
  { name: 'Scripting', w: 94 },
]

const topGroups: Group[] = [
  {
    gap: 14,
    parts: [
      { w: 43, icon: 'scene', chev: true, tone: 'dark' },
      { w: 167, text: 'Scene', tone: 'field', left: true },
      { w: 28, icon: 'copy', tone: 'light' },
      { w: 28, icon: 'close', tone: 'light' },
    ],
  },
  {
    gap: 8,
    parts: [
      { w: 43, icon: 'viewLayer', chev: true, tone: 'dark' },
      { w: 169, text: 'View Layer', tone: 'field', left: true },
      { w: 28, icon: 'copy', tone: 'light' },
      { w: 27, icon: 'close', tone: 'light' },
    ],
  },
]

const booleans = [
  { name: 'New', w: 72 },
  { name: 'Add', w: 70.5 },
  { name: 'Subtract', w: 102 },
  { name: 'Difference', w: 116.5 },
  { name: 'Intersect', w: 103.5 },
]

const viewGroups: Group[] = [
  { gap: 13, parts: [{ w: 42, icon: 'view3d', chev: true, tone: 'dark' }] },
  { gap: 10, parts: [{ w: 152, icon: 'object', text: 'Object Mode', chev: true, tone: 'dark', pad: 5 }] },
  { gap: 8, parts: [{ w: 54, text: 'View', tone: 'menu' }] },
  { gap: 2, parts: [{ w: 63, text: 'Select', tone: 'menu' }] },
  { gap: 2, parts: [{ w: 47, text: 'Add', tone: 'menu' }] },
  { gap: 2, parts: [{ w: 65, text: 'Object', tone: 'menu' }] },
  { gap: 148, parts: [{ w: 110, icon: 'orient', text: 'Global', chev: true, tone: 'dark', pad: 4 }] },
  {
    gap: 8,
    parts: [
      { w: 26, icon: 'snap', tone: 'light' },
      { w: 55.5, icon: 'snapTarget', chev: true, tone: 'dark' },
    ],
  },
  {
    gap: 8.5,
    parts: [
      { w: 26, icon: 'propOn', tone: 'light' },
      { w: 43.5, icon: 'falloff', chev: true, tone: 'dark' },
    ],
  },
  { gap: 8.5, parts: [{ w: 53.5, icon: 'pivot', chev: true, tone: 'dark' }] },
  { gap: 131.5, parts: [{ w: 53.5, icon: 'collection', chev: true, tone: 'dark' }] },
  { gap: 8.5, parts: [{ w: 54, icon: 'eyeArrow', chev: true, tone: 'dark' }] },
  {
    gap: 8,
    parts: [
      { w: 26, icon: 'overlays', tone: 'blue' },
      { w: 95, text: 'Overlays', chev: true, tone: 'dark', pad: 11 },
    ],
  },
  { gap: 13, parts: [{ w: 26, icon: 'xray', tone: 'light' }] },
  {
    gap: 8,
    parts: [
      { w: 27, icon: 'wire', tone: 'light' },
      { w: 27, icon: 'solid', tone: 'blue' },
      { w: 28.5, icon: 'material', tone: 'light' },
      { w: 28, icon: 'rendered', tone: 'light' },
      { w: 93, text: 'Shading', chev: true, tone: 'dark', pad: 10.5 },
    ],
  },
]

const toolGroups = [
  [
    { id: 'select', h: 47, more: true },
    { id: 'cursor', h: 49 },
  ],
  [
    { id: 'transform', h: 48 },
    { id: 'move', h: 49 },
    { id: 'rotate', h: 48.5 },
    { id: 'scale', h: 48.5, more: true },
  ],
  [
    { id: 'annotate', h: 47, more: true },
    { id: 'measure', h: 49 },
  ],
]

const navButtons = ['grid', 'camera', 'hand', 'zoom']

const timelineGroups: Group[] = [
  { gap: 12, parts: [{ w: 43, icon: 'clock', chev: true, tone: 'dark' }] },
  {
    gap: 7,
    parts: [
      { w: 99, text: 'Playback', chev: true, tone: 'dark', pad: 10 },
      { w: 84, text: 'Keying', chev: true, tone: 'dark', pad: 10 },
    ],
  },
  { gap: 11, plain: true, parts: [{ w: 56, text: 'View' }] },
  { gap: 0, plain: true, parts: [{ w: 70, text: 'Marker' }] },
  { gap: 296, parts: [{ w: 26, icon: 'record', tone: 'light' }] },
  {
    gap: 8,
    parts: [
      { w: 26.5, icon: 'jumpStart', tone: 'light' },
      { w: 28.5, icon: 'rewind', tone: 'light' },
      { w: 28, icon: 'playBack', tone: 'light' },
      { w: 27.5, icon: 'play', tone: 'light' },
      { w: 28, icon: 'forward', tone: 'light' },
      { w: 27, icon: 'jumpEnd', tone: 'light' },
    ],
  },
  { gap: 291.5, parts: [{ w: 114, text: '1', tone: 'light' }] },
  {
    gap: 8,
    parts: [
      { w: 26, icon: 'timer', tone: 'light' },
      { w: 124.5, text: 'Start:', text2: '1', tone: 'light', pad: 21, padR: 23 },
      { w: 119, text: 'End:', text2: '250', tone: 'light', pad: 22, padR: 22 },
    ],
  },
]

const outlinerGroups: Group[] = [
  { gap: 12, parts: [{ w: 42, icon: 'tree', chev: true, tone: 'dark' }] },
  { gap: 8, parts: [{ w: 42, icon: 'viewLayer', chev: true, tone: 'dark' }] },
  { gap: 22, parts: [{ w: 157, icon: 'search', tone: 'field', left: true, pad: 5 }] },
  { gap: 22, parts: [{ w: 42, icon: 'filter', tone: 'dark', left: true, pad: 8 }] },
]

const outlinerCols = ['eye', 'cursorArrow', 'monitor', 'cameraRender']

const propTabs = [
  ['tool'],
  ['render', 'output', 'viewLayer', 'scene', 'world'],
  ['object', 'constraint', 'modifier', 'mesh', 'matTab', 'texture', 'particles', 'physics'],
]

const transformBlocks = [
  {
    id: 'loc',
    rows: [
      { label: 'Location X', value: '0m' },
      { label: 'Y', value: '0m' },
      { label: 'Z', value: '0m' },
    ],
  },
  {
    id: 'rot',
    rows: [
      { label: 'Rotation X', value: '0°' },
      { label: 'Y', value: '0°' },
      { label: 'Z', value: '0°' },
    ],
  },
  {
    id: 'scale',
    rows: [
      { label: 'Scale X', value: '1.000' },
      { label: 'Y', value: '1.000' },
      { label: 'Z', value: '1.000' },
    ],
  },
]

const collapsedPanels = ['Relations', 'Collections', 'Instancing', 'Motion Paths', 'Viewport Display', 'Custom Properties']

const statusHints = [
  { text: 'Select', mouse: 'left', w: 92 },
  { text: 'Box Select', mouse: 'drag', w: 225.6 },
  { text: 'Zoom View', mouse: 'middle', w: 313.4 },
  { text: 'Lasso Select', mouse: 'right', w: 200 },
]

function partClass(p: Part): (string | undefined | false)[] {
  return [p.tone, !!p.text && 'txt']
}

function partStyle(p: Part): Record<string, string> {
  const style: Record<string, string> = { width: p.w + 'px' }
  const leftAligned = p.left || p.pad !== undefined
  style.justifyContent = leftAligned ? 'flex-start' : 'center'
  if (p.pad !== undefined) style.paddingLeft = p.pad + 'px'
  if (p.padR !== undefined) style.paddingRight = p.padR + 'px'
  return style
}

// perspectiva do plano do chão, ajustada nos cantos do cubo
const A = -0.04347
const B = 0.02032

function project(x: number, y: number): [number, number] {
  const w = 1 + A * x + B * y
  return [(793 + 200 * A * x + 3513 * B * y) / w, (528 - 50 * A * x - 50 * B * y) / w]
}

function segment(x0: number, y0: number, x1: number, y1: number): string {
  const a = project(x0, y0)
  const b = project(x1, y1)
  return `M${a[0].toFixed(1)} ${a[1].toFixed(1)} L${b[0].toFixed(1)} ${b[1].toFixed(1)}`
}

const FAR = 80
// limite antes da câmera, onde w chega perto de zero
const nearX = (y: number) => (0.96 + B * y) / -A
const nearY = (x: number) => -(0.96 + A * x) / B

const gridLines: { id: string; d: string; o: number }[] = []
for (let i = -FAR; i <= FAR; i++) {
  if (i === 0) continue
  const o = Math.min(0.9, Math.max(0.1, 1 - Math.abs(i) / 24))
  if (1 + A * i > 0.05) {
    gridLines.push({ id: `x${i}`, d: segment(i, nearY(i), i, FAR), o })
  }
  if (1 + B * i > 0.05) {
    gridLines.push({ id: `y${i}`, d: segment(nearX(i), i, -FAR, i), o })
  }
}

const redAxis = segment(nearX(0), 0, -FAR, 0)
const greenAxis = segment(0, nearY(0), 0, FAR)

const cubeLines = [segment(-1, -1, 4, -1), segment(1, -1, 1, 1), segment(1, -1, 1, -4), segment(2, -4, 2, 1)]

const lowerCubeClip = [project(-1, -1), project(1, -1), project(1, 1), [875, 597], [762, 623], [717, 572]]
  .map((p) => `${p[0]},${p[1]}`)
  .join(' ')

// linha do tempo
function frameX(f: number): number {
  return 112.5 + (f - 10) * 5.88
}

const frameLabels: number[] = []
for (let f = 10; f <= 250; f += 10) frameLabels.push(f)

const timelineTicks: { x: number; major: boolean }[] = []
for (let f = -5; f <= 260; f += 5) {
  timelineTicks.push({ x: Math.round(frameX(f)) + 0.5, major: f % 10 === 0 })
}
</script>

<style>
html,
body {
  margin: 0;
  background: #1c1c1c;
}
</style>

<style scoped>
.app {
  width: 1920px;
  height: 1080px;
  display: flex;
  flex-direction: column;
  overflow: hidden;
  background: #1c1c1c;
  color: #e6e6e6;
  font-family: 'DejaVu Sans', sans-serif;
  font-size: 14.3px;
  text-shadow: 0 1px 1px rgba(0, 0, 0, 0.45);
}

svg {
  display: block;
  flex: none;
}

.topbar {
  height: 36px;
  flex: none;
  display: flex;
  background: #232323;
}

.logo {
  width: 45px;
  padding: 9px 0 0 13px;
  box-sizing: border-box;
}

.menus {
  width: 320px;
  display: flex;
  align-items: center;
}

.menu {
  padding: 0 10.5px;
}

.tabs {
  display: flex;
  align-items: flex-end;
}

.tab {
  height: 28px;
  box-sizing: border-box;
  display: flex;
  align-items: center;
  justify-content: center;
  background: #2b2b2b;
  color: #a8a8a8;
  border-radius: 5px 5px 0 0;
  margin-right: 1px;
  margin-left: -1px;
  padding-left: 1px;
}

.tab:first-child {
  margin-left: 0;
}

.tab.active {
  background: #444;
  color: #e6e6e6;
}

.bar-groups {
  display: flex;
  align-items: center;
}

.grp {
  display: flex;
  height: 26px;
  border-radius: 5px;
  overflow: hidden;
  flex: none;
}

.topbar .grp {
  height: 27px;
  box-shadow: 0 0 0 1px #2e2e2e inset;
}

.part {
  height: 100%;
  box-sizing: border-box;
  display: flex;
  align-items: center;
  gap: 3px;
  flex: none;
  white-space: nowrap;
}

.part.txt {
  gap: 10px;
}

.part.txt .chev {
  margin-left: auto;
  margin-right: 4px;
}

.part + .part {
  border-left: 1px solid #383838;
}

.part.dark {
  background: #2c2c2c;
}

.part.menu {
  background: #373737;
}

.part.field {
  background: #1d1d1d;
  padding-left: 10px;
}

.part.light {
  background: #545454;
}

.part.blue {
  background: #5680c2;
}

.val {
  margin-left: auto;
}

.toolsettings {
  height: 45px;
  flex: none;
  display: flex;
  align-items: center;
  background: #434343;
  border-bottom: 2px solid #1c1c1c;
  box-sizing: content-box;
}

.ts-icon {
  padding-left: 20px;
  width: 71px;
  box-sizing: border-box;
}

.booleans {
  display: flex;
  height: 26px;
  border-radius: 5px;
  overflow: hidden;
}

.bool {
  display: flex;
  align-items: center;
  justify-content: center;
  background: #585858;
  box-sizing: border-box;
  border-right: 1px solid #3c3c3c;
}

.bool:last-child {
  border-right: none;
}

.bool.on {
  background: #5680c2;
}

.ts-sep {
  width: 1px;
  height: 45px;
  margin-left: 12px;
  background: #3a3a3a;
}

.ts-sep.end {
  margin-left: auto;
  margin-right: 19px;
}

.workspace {
  flex: 1;
  min-height: 0;
  display: flex;
  gap: 3px;
}

.left-col {
  width: 1585px;
  display: flex;
  flex-direction: column;
  gap: 3px;
}

.right-col {
  flex: 1;
  min-width: 0;
  display: flex;
  flex-direction: column;
  gap: 6px;
}

.viewport {
  height: 892px;
  flex: none;
  position: relative;
  background: #3f3f3f;
  border-radius: 0 6px 6px 6px;
  overflow: hidden;
}

.scene {
  position: absolute;
  left: 0;
  top: 0;
}

.vp-header {
  position: relative;
  height: 26px;
  padding-top: 4px;
  display: flex;
}

.vp-body {
  position: relative;
  display: flex;
  padding: 17px 0 0 12px;
}

.toolbar {
  width: 54px;
  display: flex;
  flex-direction: column;
  gap: 8px;
}

.tool-group {
  border-radius: 5px;
  overflow: hidden;
  box-shadow: 0 1px 2px rgba(0, 0, 0, 0.3);
}

.tool {
  position: relative;
  background: #545454;
  display: flex;
  align-items: center;
  justify-content: center;
  box-sizing: border-box;
}

.tool + .tool {
  border-top: 1px solid #2f2f2f;
}

.tool.on {
  background: #5680c2;
}

.more {
  position: absolute;
  right: 2px;
  bottom: 2px;
  border-left: 7px solid transparent;
  border-bottom: 7px solid rgba(255, 255, 255, 0.4);
}

.vp-info {
  padding: 0 0 0 39px;
  line-height: 28px;
  margin-top: -3px;
}

.nav-buttons {
  position: absolute;
  left: 1301px;
  top: 48px;
  display: flex;
  gap: 4px;
}

.nav-btn {
  width: 38.3px;
  height: 38.3px;
  border-radius: 50%;
  background: #2c2c2c;
  display: flex;
  align-items: center;
  justify-content: center;
}

.axis-gizmo {
  position: absolute;
  left: 1460px;
  top: 47px;
}

.axis-letter {
  font-size: 14px;
  font-weight: 400;
  text-anchor: middle;
  fill: #101010;
  text-shadow: none;
}

.vp-plus {
  position: absolute;
  right: 0;
  top: 56px;
  width: 20px;
  height: 19px;
  background: #333;
  border-radius: 4px 0 0 4px;
  color: #8a8a8a;
  text-align: center;
  line-height: 19px;
}

.timeline {
  flex: 1;
  min-height: 0;
  background: #3f3f3f;
  border-radius: 6px 6px 0 0;
  overflow: hidden;
  display: flex;
  flex-direction: column;
}

.tl-header {
  height: 35px;
  flex: none;
  padding-top: 4.5px;
  box-sizing: border-box;
  display: flex;
  background: #3f3f3f;
}

.grp.plain {
  overflow: visible;
}

.tl-body {
  position: relative;
  flex: 1;
  border-top: 1px solid #101010;
}

.tl-ticks {
  position: absolute;
  left: 0;
  top: 0;
}

.tl-line {
  position: absolute;
  left: 58px;
  top: 0;
  width: 2px;
  height: 17px;
  background: #5680c2;
}

.ruler {
  position: absolute;
  left: 2px;
  right: 4px;
  top: 16px;
  height: 18.5px;
  background: #6b6b6b;
  border-radius: 9px 9px 0 0;
}

.frame-num {
  position: absolute;
  top: 0;
  line-height: 22px;
  transform: translateX(-50%);
  margin-left: -2px;
  color: #eee;
}

.ruler-end {
  position: absolute;
  top: 2px;
  width: 14px;
  height: 16px;
  line-height: 18px;
  border-radius: 7px 7px 0 0;
  background: #4a4a4a;
  color: #999;
  text-align: center;
  font-size: 13px;
}

.ruler-end.left {
  left: 2px;
}

.ruler-end.right {
  right: 2px;
}

.frame-cursor {
  position: absolute;
  left: 48px;
  top: 15px;
  width: 22px;
  height: 21px;
  border-radius: 3px;
  background: #5680c2;
  color: #fff;
  text-align: center;
  line-height: 24px;
}

.outliner {
  height: 307px;
  flex: none;
  border-radius: 6px 0 0 6px;
  overflow: hidden;
  background: #292929;
  display: flex;
  flex-direction: column;
}

.ol-header {
  height: 34px;
  flex: none;
  background: #434343;
  padding-top: 4px;
  box-sizing: border-box;
  display: flex;
}

.ol-rows {
  position: relative;
  flex: 1;
}

.ol-row {
  height: 28.5px;
  background: #292929;
}

.ol-row.alt {
  background: #2d2d2d;
}

.ol-clip {
  width: 208px;
  height: 100%;
  padding-top: 6px;
  box-sizing: border-box;
  overflow: hidden;
  display: flex;
  align-items: center;
}

.ol-scene-ic {
  margin-left: 32px;
}

.ol-scene {
  margin-left: 9px;
  color: #b4b4b4;
}

.ol-tri {
  margin-left: 38px;
}

.ol-badge {
  margin-left: 11px;
  width: 25px;
  height: 25px;
  border-radius: 50%;
  background: #666a78;
  display: flex;
  align-items: center;
  justify-content: center;
  flex: none;
}

.ol-name {
  margin-left: 7px;
  width: 86px;
  flex: none;
}

.ol-caret {
  width: 2px;
  height: 18px;
  background: #050505;
  flex: none;
}

.ol-mesh {
  margin-left: 12px;
  width: 25px;
  height: 25px;
  border-radius: 50%;
  background: #4a4a4a;
  display: flex;
  align-items: center;
  justify-content: center;
  flex: none;
}

.ol-cols {
  position: absolute;
  left: 208px;
  top: 0;
  bottom: 0;
  display: flex;
}

.ol-col {
  width: 28px;
  border-left: 1px solid #1d1d1d;
  box-sizing: border-box;
}

.ol-col-ic {
  margin: 35px 0 0 3px;
}

.properties {
  flex: 1;
  min-height: 0;
  display: flex;
  flex-direction: column;
  border-radius: 6px 6px 0 6px;
  overflow: hidden;
  margin-bottom: 2px;
}

.pr-header {
  height: 35px;
  flex: none;
  display: flex;
  align-items: center;
  background: #434343;
  padding: 0 15px 2px 12px;
  box-sizing: border-box;
}

.pr-cube {
  margin-left: 18px;
}

.pr-title {
  margin-left: 12px;
}

.pr-pin {
  margin-left: auto;
}

.pr-main {
  flex: 1;
  min-height: 0;
  display: flex;
}

.pr-tabs {
  width: 39px;
  flex: none;
  background: #272727;
  padding-top: 10px;
  box-sizing: border-box;
  display: flex;
  flex-direction: column;
  gap: 11px;
}

.pr-tabgroup {
  display: flex;
  flex-direction: column;
}

.pr-tab {
  height: 39.2px;
  margin-left: 1px;
  background: #303030;
  border-radius: 6px 0 0 6px;
  display: flex;
  align-items: center;
  justify-content: center;
  border-bottom: 1px solid #272727;
  box-sizing: border-box;
}

.pr-tab.on {
  background: #3d3d3d;
}

.pr-content {
  flex: 1;
  min-width: 0;
  background: #3d3d3d;
  display: flex;
  flex-direction: column;
}

.name-row {
  flex: none;
  height: 27px;
  margin: 12px 11px 0 12px;
  display: flex;
  border-radius: 5px;
  overflow: hidden;
}

.name-ic {
  width: 43px;
  background: #2c2c2c;
  display: flex;
  align-items: center;
  justify-content: center;
  gap: 2px;
  border-right: 1px solid #3d3d3d;
}

.name-field {
  flex: 1;
  background: #1d1d1d;
  padding-left: 10px;
  line-height: 27px;
}

.panel-head {
  height: 32px;
  flex: none;
  display: flex;
  align-items: center;
  color: #c8c8c8;
  font-size: 15.7px;
  padding: 0 12px 0 15px;
}

.panel-head.first {
  height: 33px;
  margin-top: 10px;
  background: #424242;
}

.panel-head .tri {
  margin-right: 10px;
}

.panel-head .tri.down {
  margin-right: 9px;
}

.grip {
  margin-left: auto;
  width: 14px;
  height: 6px;
  background-image: radial-gradient(circle, #bdbdbd 0.9px, transparent 1.2px);
  background-size: 3.5px 3px;
}

.tri {
  display: block;
  flex: none;
  width: 0;
  height: 0;
}

.tri.down {
  border-left: 4.5px solid transparent;
  border-right: 4.5px solid transparent;
  border-top: 8px solid #a8a8a8;
}

.tri.right {
  border-top: 4.5px solid transparent;
  border-bottom: 4.5px solid transparent;
  border-left: 8px solid #a8a8a8;
}

.panel-body {
  flex: 1;
  padding-top: 11.5px;
  box-sizing: border-box;
}

.xf-block {
  margin-bottom: 4.3px;
}

.xf-row {
  height: 27.33px;
  display: flex;
  align-items: center;
}

.xf-row label {
  width: 116.5px;
  text-align: right;
  flex: none;
  color: #d0d0d0;
}

.xf-field {
  margin-left: 16.5px;
  width: 92.5px;
  height: 26.6px;
  background: #585858;
  text-align: center;
  line-height: 26.6px;
  flex: none;
}

.xf-field.first {
  border-radius: 5px 5px 0 0;
}

.xf-field.last {
  border-radius: 0 0 5px 5px;
  box-shadow: 0 1px 0 #2f2f2f;
}

.lock {
  margin-left: 3px;
}

.dot {
  width: 5px;
  height: 5px;
  border-radius: 50%;
  background: #e0e0e0;
  margin-left: 18px;
  flex: none;
}

.xf-row.mode {
  margin-top: 7.5px;
}

.mode-select {
  margin-left: 16.5px;
  width: 92.5px;
  height: 26.6px;
  background: #2a2a2a;
  border-radius: 5px;
  display: flex;
  align-items: center;
  padding-left: 10px;
  box-sizing: border-box;
  flex: none;
  white-space: nowrap;
}

.mode-select .chev {
  margin-left: auto;
  margin-right: 3px;
}

.xf-row.mode .dot {
  margin-left: 39px;
}

.subpanel {
  display: flex;
  align-items: center;
  height: 34px;
  margin-top: 8.7px;
  padding-left: 19.7px;
  color: #c8c8c8;
}

.subpanel .tri {
  margin-right: 10.7px;
}

.collapsed {
  flex: none;
  background: #444;
  height: 193px;
}

.statusbar {
  height: 28px;
  flex: none;
  display: flex;
  align-items: center;
  background: #2b2b2b;
  color: #a6a6a6;
  padding-left: 14px;
  box-sizing: border-box;
}

.hint {
  display: flex;
  align-items: center;
  gap: 11px;
  flex: none;
}

.stats {
  margin-left: auto;
  padding-right: 43px;
  white-space: nowrap;
  font-size: 14.15px;
}
</style>
